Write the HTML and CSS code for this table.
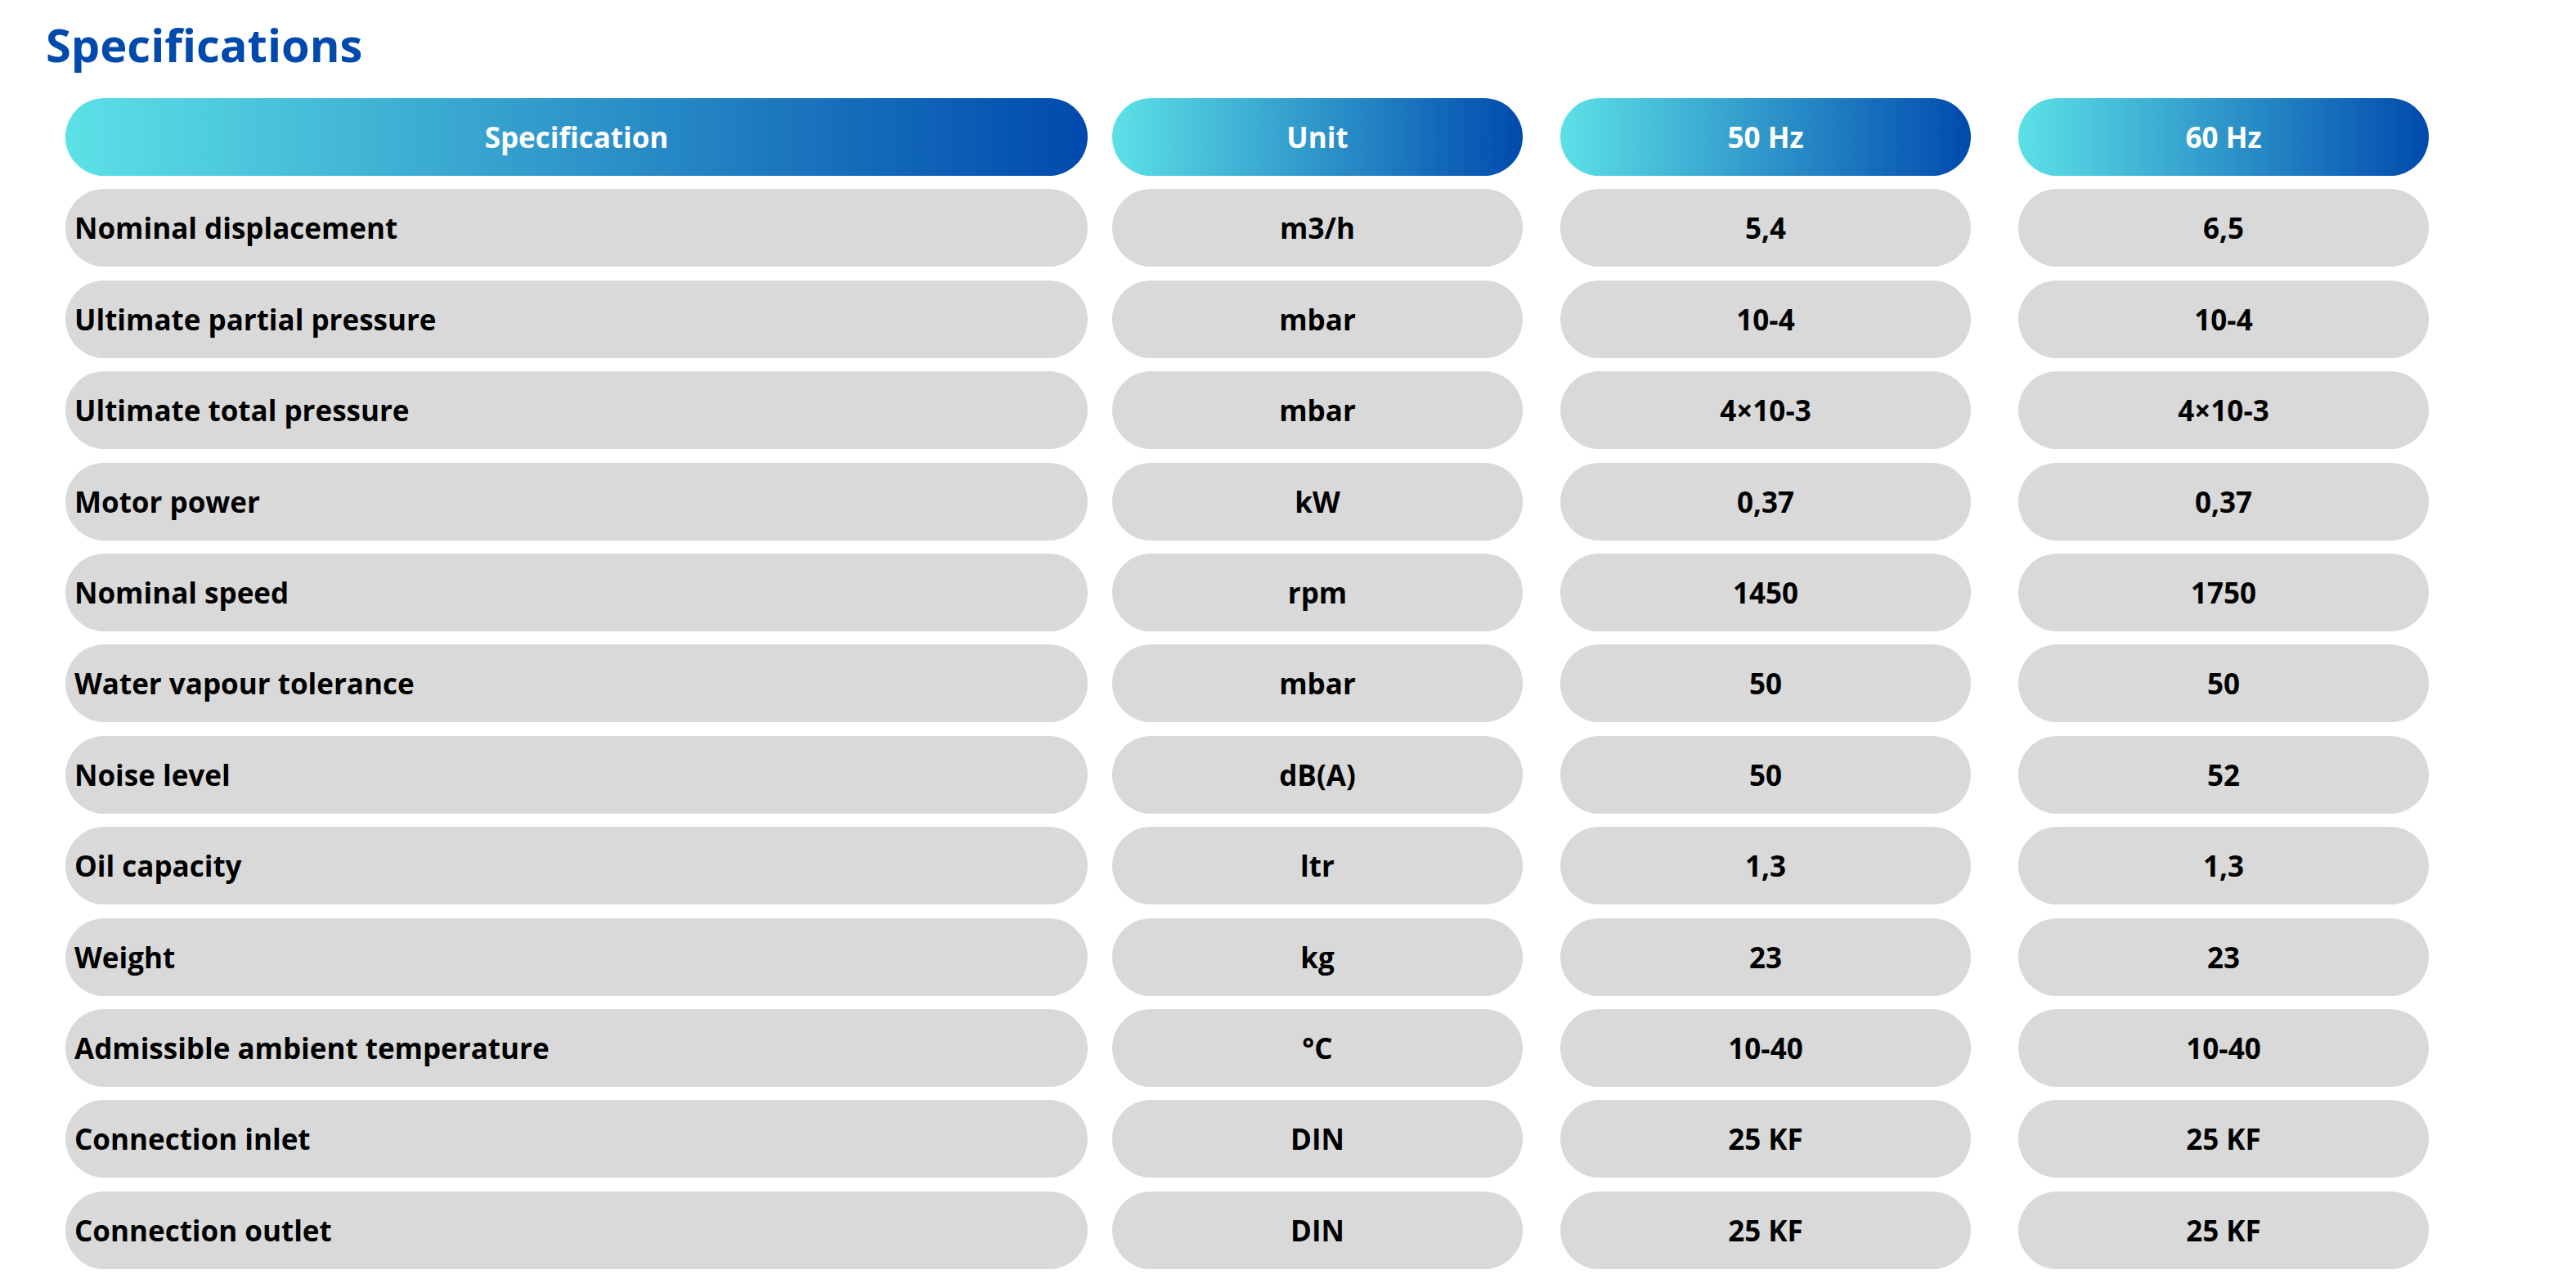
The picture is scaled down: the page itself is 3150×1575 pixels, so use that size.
FILE: index.html
```html
<!DOCTYPE html>
<html lang="en">
<head>
<meta charset="utf-8">
<title>Specifications</title>
<link rel="stylesheet" href="styles.css">
</head>
<body>
<main class="page">
  <h1 class="title">Specifications</h1>
  <div class="spec-table">
    <div class="cell head first">Specification</div>
    <div class="cell head">Unit</div>
    <div class="cell head">50 Hz</div>
    <div class="cell head">60 Hz</div>

    <div class="cell label">Nominal displacement</div>
    <div class="cell">m3/h</div>
    <div class="cell">5,4</div>
    <div class="cell">6,5</div>

    <div class="cell label">Ultimate partial pressure</div>
    <div class="cell">mbar</div>
    <div class="cell">10-4</div>
    <div class="cell">10-4</div>

    <div class="cell label">Ultimate total pressure</div>
    <div class="cell">mbar</div>
    <div class="cell">4×10-3</div>
    <div class="cell">4×10-3</div>

    <div class="cell label">Motor power</div>
    <div class="cell">kW</div>
    <div class="cell">0,37</div>
    <div class="cell">0,37</div>

    <div class="cell label">Nominal speed</div>
    <div class="cell">rpm</div>
    <div class="cell">1450</div>
    <div class="cell">1750</div>

    <div class="cell label">Water vapour tolerance</div>
    <div class="cell">mbar</div>
    <div class="cell">50</div>
    <div class="cell">50</div>

    <div class="cell label">Noise level</div>
    <div class="cell">dB(A)</div>
    <div class="cell">50</div>
    <div class="cell">52</div>

    <div class="cell label">Oil capacity</div>
    <div class="cell">ltr</div>
    <div class="cell">1,3</div>
    <div class="cell">1,3</div>

    <div class="cell label">Weight</div>
    <div class="cell">kg</div>
    <div class="cell">23</div>
    <div class="cell">23</div>

    <div class="cell label">Admissible ambient temperature</div>
    <div class="cell">°C</div>
    <div class="cell">10-40</div>
    <div class="cell">10-40</div>

    <div class="cell label">Connection inlet</div>
    <div class="cell">DIN</div>
    <div class="cell">25 KF</div>
    <div class="cell">25 KF</div>

    <div class="cell label">Connection outlet</div>
    <div class="cell">DIN</div>
    <div class="cell">25 KF</div>
    <div class="cell">25 KF</div>
  </div>
</main>
</body>
</html>
```
FILE: styles.css
```css
html, body {
  margin: 0;
  padding: 0;
  background: #ffffff;
}

body {
  font-family: "Open Sans", "Noto Sans", "Liberation Sans", sans-serif;
  font-weight: 700;
  color: #000000;
}

.page {
  padding: 26px 0 0 0;
}

.title {
  margin: 0 0 38px 56px;
  font-size: 56px;
  line-height: 56px;
  font-weight: 700;
  color: #004aad;
}

.spec-table {
  display: grid;
  grid-template-columns: 1250px 532px 548px 560px;
  grid-auto-rows: 95px;
  row-gap: 16.4px;
  margin-left: 80px;
}

.cell {
  width: 502px;
  justify-self: end;
  display: flex;
  align-items: center;
  justify-content: center;
  border-radius: 48px;
  background: #d9d9d9;
  font-size: 35px;
  line-height: 1;
  white-space: nowrap;
}

.cell.label,
.cell.first {
  width: auto;
  justify-self: stretch;
}

.cell.label {
  justify-content: flex-start;
  padding-left: 11px;
}

.cell.head {
  background: linear-gradient(90deg, #5ce1e6 0%, #004aad 100%);
  color: #ffffff;
}
```
